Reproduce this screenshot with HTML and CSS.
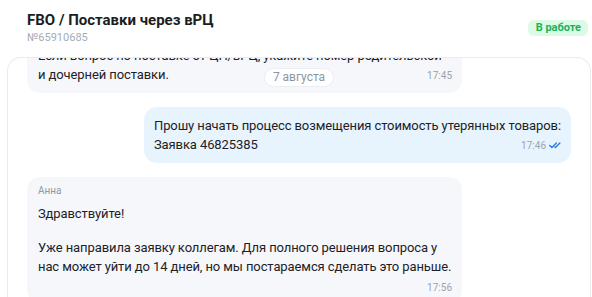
FILE: index.html
```html
<!DOCTYPE html>
<html lang="ru">
<head>
<meta charset="utf-8">
<title>FBO / Поставки через вРЦ</title>
<link rel="stylesheet" href="styles.css">
</head>
<body>
<div class="page">
  <header class="header">
    <div class="titles">
      <h1 class="title">FBO / Поставки через вРЦ</h1>
      <div class="number">№65910685</div>
    </div>
    <span class="status">В работе</span>
  </header>
  <section class="chat">
    <div class="date-pill">7 августа</div>
    <div class="messages">
      <div class="msg msg-in msg-first">
        <div class="line">Если вопрос по поставке от ЦП/вРЦ, укажите номер родительской</div>
        <div class="line-last"><span>и дочерней поставки.</span><span class="time">17:45</span></div>
      </div>
      <div class="msg msg-out">
        <div class="line">Прошу начать процесс возмещения стоимость утерянных товаров:</div>
        <div class="line-last"><span>Заявка 46825385</span><span class="time">17:46<svg class="checks" width="12" height="7" viewBox="0 0 12 7"><path d="M0.8 3.6 L2.9 5.6 L7.4 1" fill="none" stroke="#2a7de1" stroke-width="1.4" stroke-linecap="round" stroke-linejoin="round"/><path d="M5.9 5.1 L6.4 5.6 L10.9 1" fill="none" stroke="#2a7de1" stroke-width="1.4" stroke-linecap="round" stroke-linejoin="round"/></svg></span></div>
      </div>
      <div class="msg msg-in msg-named">
        <div class="author">Анна</div>
        <p class="para">Здравствуйте!</p>
        <p class="para para-gap">Уже направила заявку коллегам. Для полного решения вопроса у<br>нас может уйти до 14 дней, но мы постараемся сделать это раньше.</p>
        <div class="time-row"><span class="time">17:56</span></div>
      </div>
    </div>
  </section>
</div>
</body>
</html>
```

FILE: styles.css
```css
* { box-sizing: border-box; }
html, body {
  margin: 0;
  padding: 0;
  background: #ffffff;
}
body {
  font-family: Roboto, "Noto Sans", sans-serif;
  color: #1d2127;
  width: 592px;
  height: 297px;
  overflow: hidden;
}
.page {
  display: flex;
  flex-direction: column;
}
.header {
  display: flex;
  align-items: center;
  justify-content: space-between;
  padding: 10px 4px 12px 27px;
  height: 57px;
}
.titles {
  display: flex;
  flex-direction: column;
}
.title {
  margin: 0;
  font-size: 15px;
  line-height: 20px;
  font-weight: 700;
  color: #1a1d22;
}
.number {
  font-size: 11px;
  line-height: 15px;
  color: #a3acb7;
}
.status {
  background: #dcfbe6;
  color: #1db157;
  font-size: 11px;
  font-weight: 700;
  line-height: 16px;
  padding: 0 7px 0 8px;
  border-radius: 6px;
  margin-top: 1px;
}
.chat {
  position: relative;
  margin-left: 7px;
  margin-right: 1px;
  border: 1px solid #e9ebef;
  border-bottom: none;
  border-radius: 14px 14px 0 0;
  height: 260px;
  overflow: hidden;
}
.date-pill {
  position: absolute;
  top: 10px;
  left: 50%;
  transform: translateX(-50%);
  z-index: 2;
  background: #ffffff;
  border: 1px solid #eceef2;
  border-radius: 10px;
  font-size: 12px;
  line-height: 17px;
  color: #8c96a2;
  padding: 0 8px;
  white-space: nowrap;
}
.messages {
  display: flex;
  flex-direction: column;
  gap: 14px;
  padding: 0 19px 0 19px;
}
.msg {
  border-radius: 13px;
  padding: 9px 10px 9px 10px;
  font-size: 13px;
  line-height: 19px;
  letter-spacing: -0.1px;
}
.line { white-space: nowrap; }
.msg-first { margin-top: -21px; }
.msg-in {
  align-self: flex-start;
  width: 435px;
  background: #f5f7fb;
  padding-left: 11px;
}
.msg-named { padding-top: 7px; }
.msg-out {
  align-self: flex-end;
  background: #e7f4fe;
}
.line-last {
  display: flex;
  justify-content: space-between;
  align-items: center;
  gap: 12px;
}
.time {
  display: inline-flex;
  align-items: center;
  gap: 3px;
  font-size: 10px;
  line-height: 13px;
  letter-spacing: 0;
  color: #9aa4b0;
  margin-top: 2px;
}
.checks { display: block; }
.author {
  font-size: 10px;
  line-height: 13px;
  letter-spacing: 0;
  color: #8f99a5;
  margin-bottom: 7px;
}
.para { margin: 0; white-space: nowrap; }
.para-gap { margin-top: 15px; }
.time-row {
  display: flex;
  justify-content: flex-end;
  margin-top: 3px;
}
```
